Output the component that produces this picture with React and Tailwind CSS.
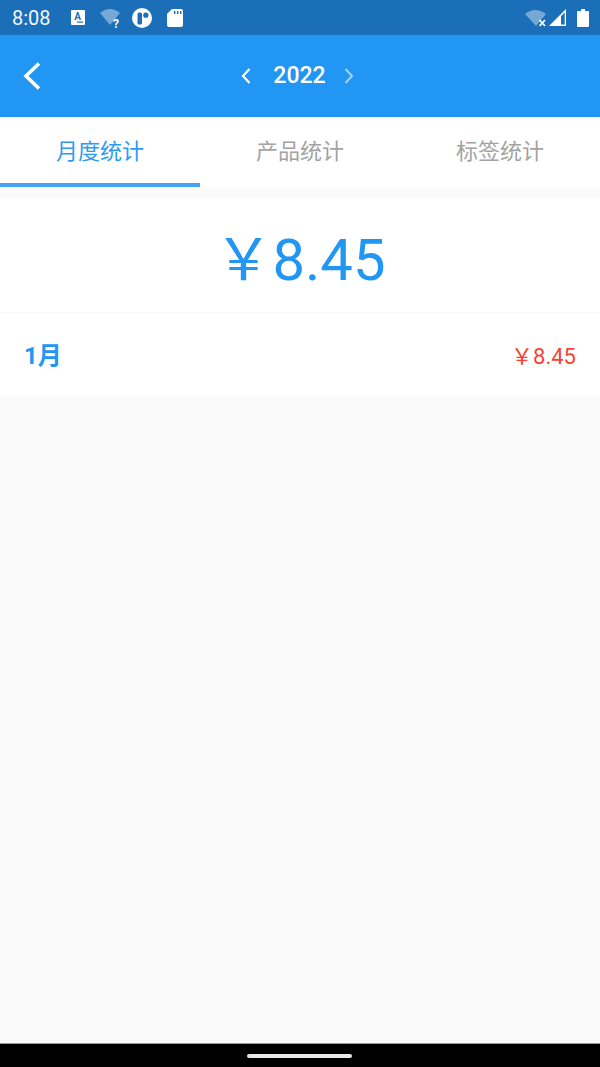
import React from 'react'

const font = { fontFamily: 'Roboto, "Noto Sans CJK SC", sans-serif' }

function StatusBar() {
  return (
    <div className="h-[35px] bg-[#1a6fb8] flex items-center text-white">
      <span className="ml-3 w-[39px] text-[20px] leading-none text-[#f2f7fb]">8:08</span>
      {/* notification icons */}
      <svg className="ml-[20px]" width="14" height="15" viewBox="0 0 14 15">
        <rect width="14" height="15" rx="1" fill="#fff" />
        <text x="6.5" y="9.5" textAnchor="middle" fontSize="10" fontWeight="700" fill="#1a6fb8" fontFamily="Roboto">A</text>
        <rect x="6" y="11.5" width="6" height="1.2" fill="#1a6fb8" />
      </svg>
      <svg className="ml-[15px] overflow-visible" width="22" height="25" viewBox="0 0 22 25">
        <path d="M0 8 Q10 0 20 8 L10 20 Z" fill="#fff" opacity="0.4" />
        <text x="13" y="23" fontSize="12" fontWeight="700" fill="#fff" fontFamily="Roboto">?</text>
      </svg>
      <svg className="ml-[10px]" width="20" height="20" viewBox="0 0 20 20">
        <circle cx="10" cy="10" r="10" fill="#fff" />
        <rect x="5.5" y="4.5" width="4.5" height="12" rx="1.5" fill="#1a6fb8" />
        <circle cx="13.8" cy="7.2" r="2.6" fill="#1a6fb8" />
      </svg>
      <svg className="ml-[15px]" width="16" height="18" viewBox="0 0 16 18">
        <path d="M5 0 H14 a2 2 0 0 1 2 2 V16 a2 2 0 0 1 -2 2 H2 a2 2 0 0 1 -2 -2 V5 Z" fill="#fff" />
        <rect x="7" y="2" width="1.4" height="3" fill="#1a6fb8" />
        <rect x="10" y="2" width="1.4" height="3" fill="#1a6fb8" />
        <rect x="13" y="2" width="1.4" height="3" fill="#1a6fb8" />
      </svg>
      {/* system icons */}
      <div className="ml-auto mr-[11px] flex items-center">
        <svg width="23" height="18" viewBox="0 0 23 18">
          <path d="M0 5 Q10 -3 21 5 L11 17 Z" fill="#fff" opacity="0.4" />
          <path d="M14.5 11 L20 17 M20 11 L14.5 17" stroke="#fff" strokeWidth="1.8" />
        </svg>
        <svg className="ml-[1px]" width="18" height="18" viewBox="0 0 18 18">
          <path d="M0 17 L17 0 V17 Z" fill="#fff" />
          <path d="M12 15.5 H15.7 V3.5 L12 7.2 Z" fill="#1a6fb8" />
        </svg>
        <svg className="ml-[10px]" width="12" height="18" viewBox="0 0 12 18">
          <path d="M4 0 H8 V2 H11 a1 1 0 0 1 1 1 V17 a1 1 0 0 1 -1 1 H1 a1 1 0 0 1 -1 -1 V3 a1 1 0 0 1 1 -1 H4 Z" fill="#fff" />
        </svg>
      </div>
    </div>
  )
}

function Header() {
  return (
    <div className="h-[82px] bg-[#2196f3] relative flex items-center justify-center text-white">
      <svg className="absolute left-[23px] top-[27px]" width="18" height="28" viewBox="0 0 18 28" fill="none" stroke="#fff" strokeWidth="3.6">
        <path d="M16 1.5 L3 14 L16 26.5" />
      </svg>
      <svg className="-ml-[5px]" width="10" height="16" viewBox="0 0 10 16" fill="none" stroke="#fff" strokeWidth="2.2">
        <path d="M8.5 1 L2 8 L8.5 15" />
      </svg>
      <span className="mx-[22px] -mt-[1px] text-[23px] font-medium leading-none">2022</span>
      <svg className="-ml-[4px]" width="10" height="16" viewBox="0 0 10 16" fill="none" stroke="#fff" strokeOpacity="0.55" strokeWidth="2.2">
        <path d="M1.5 1 L8 8 L1.5 15" />
      </svg>
    </div>
  )
}

function Tabs() {
  return (
    <div className="h-[70px] bg-white flex text-[22px]">
      <div className="w-1/3 pt-[2px] flex items-center justify-center text-[#2e9bf3] border-b-[4px] border-[#42a5f5]">月度统计</div>
      <div className="w-1/3 pt-[2px] flex items-center justify-center text-[#a3a3a3] pb-[4px]">产品统计</div>
      <div className="w-1/3 pt-[2px] flex items-center justify-center text-[#a3a3a3] pb-[4px]">标签统计</div>
    </div>
  )
}

export default function App() {
  return (
    <div className="w-[600px] h-[1067px] flex flex-col bg-[#fafafa] overflow-hidden" style={font}>
      <StatusBar />
      <Header />
      <Tabs />
      <div className="mt-[11px] bg-white">
        <div className="h-[115px] pt-[9px] flex items-center justify-center text-[#2196f3] text-[58px] leading-none border-b border-[#f7f7f7]">
          ￥8.45
        </div>
        <div className="h-[82px] pt-[4px] px-6 flex items-center justify-between">
          <span className="text-[#2196f3] text-[24px] font-bold">1月</span>
          <span className="text-[#f44336] text-[22px]">￥8.45</span>
        </div>
      </div>
      <div className="flex-1" />
      <div className="h-[24px] bg-black border-t border-[#999999] flex justify-center">
        <div className="mt-[10px] mr-[1px] w-[105px] h-[4px] rounded-full bg-[#e8e8e8]" />
      </div>
    </div>
  )
}
